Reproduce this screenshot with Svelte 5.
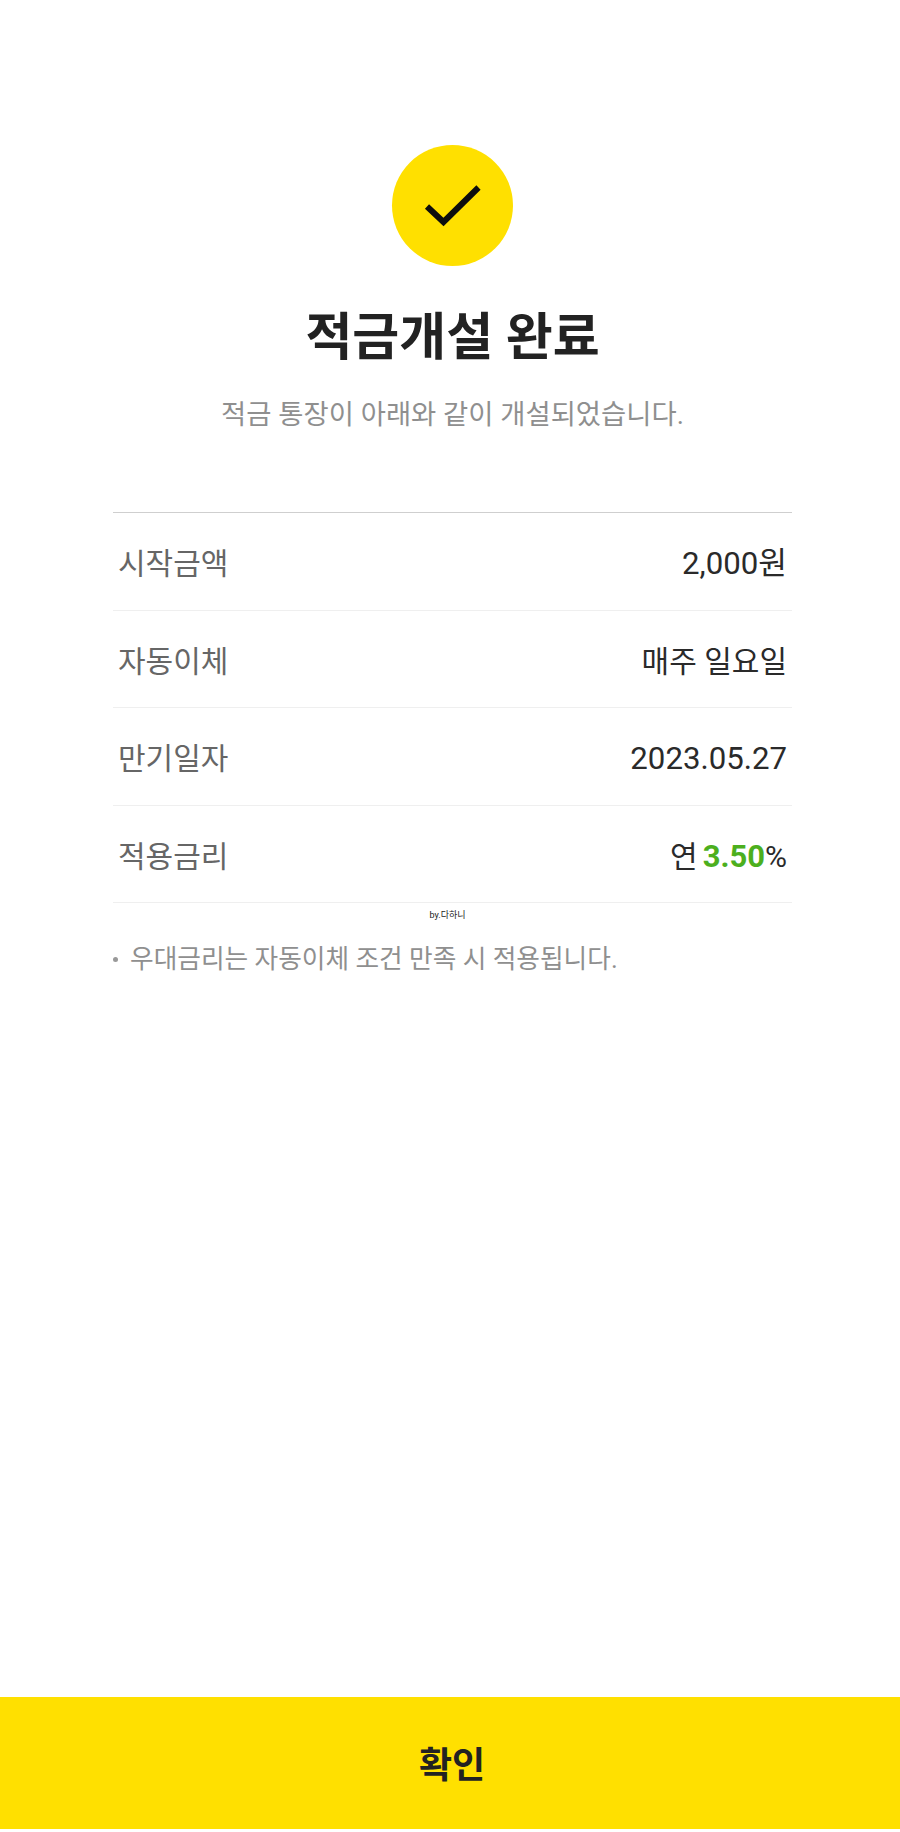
<script lang="ts">
  const rows = [
    { label: '시작금액', value: '2,000원', num: true },
    { label: '자동이체', value: '매주 일요일' },
    { label: '만기일자', value: '2023.05.27', num: true }
  ];
</script>

<div class="page">
  <main class="content">
    <div class="badge">
      <svg width="60" height="46" viewBox="0 0 60 46" aria-hidden="true">
        <path d="M4 23.5 L20.5 39 L55.5 4.5" fill="none" stroke="#0d0d0d" stroke-width="6" />
      </svg>
    </div>
    <h1 class="title">적금개설 완료</h1>
    <p class="sub">적금 통장이 아래와 같이 개설되었습니다.</p>

    <div class="table">
      {#each rows as row}
        <div class="row">
          <span class="label">{row.label}</span>
          <span class="value" class:num={row.num}>{row.value}</span>
        </div>
      {/each}
      <div class="row">
        <span class="label">적용금리</span>
        <span class="value">연<b class="rate">3.50</b>%</span>
      </div>
    </div>

    <p class="by">by.다하니</p>
    <p class="note"><span class="dot"></span>우대금리는 자동이체 조건 만족 시 적용됩니다.</p>
  </main>

  <button class="confirm">확인</button>
</div>

<style>
  :global(body) {
    margin: 0;
    background: #fff;
  }
  .page {
    height: 1832px;
    display: flex;
    flex-direction: column;
    padding-bottom: 3px;
    box-sizing: border-box;
    font-family: Roboto, "Noto Sans CJK KR", sans-serif;
  }
  .content {
    flex: 1;
    display: flex;
    flex-direction: column;
    align-items: center;
    padding: 145px 108px 0 113px;
  }
  .badge {
    width: 121px;
    height: 121px;
    border-radius: 50%;
    background: #ffe000;
    display: flex;
    align-items: center;
    justify-content: center;
  }
  .title {
    margin: 37px 0 0;
    font-size: 51px;
    line-height: 70px;
    font-weight: 700;
    color: #222;
  }
  .sub {
    margin: 23px 0 0;
    font-size: 27.4px;
    line-height: 38px;
    color: #8f8f8f;
  }
  .table {
    align-self: stretch;
    margin-top: 78px;
    border-top: 1px solid #cfcfcf;
  }
  .row {
    box-sizing: border-box;
    height: 97.5px;
    padding: 31px 5px 0;
    display: flex;
    align-items: baseline;
    justify-content: space-between;
    border-bottom: 1px solid #efefef;
    font-size: 30px;
    line-height: 40px;
  }
  .label {
    color: #666;
  }
  .value {
    color: #2a2a2a;
  }
  .num {
    font-size: 31.2px;
  }
  .rate {
    margin-left: 5px;
    font-size: 31px;
    color: #4caf1e;
    font-weight: 700;
  }
  .by {
    margin: 6px 10px 0 0;
    font-size: 9px;
    line-height: 13px;
    color: #222;
  }
  .note {
    align-self: stretch;
    margin: 18px 0 0;
    display: flex;
    align-items: center;
    font-size: 25.7px;
    line-height: 38px;
    color: #8f8f8f;
  }
  .dot {
    width: 5px;
    height: 5px;
    border-radius: 50%;
    background: #999;
    margin-right: 12px;
  }
  .confirm {
    height: 132px;
    border: 0;
    padding: 0 0 2px 4px;
    background: #ffe000;
    font-family: inherit;
    font-size: 36px;
    font-weight: 700;
    color: #222;
  }
</style>
